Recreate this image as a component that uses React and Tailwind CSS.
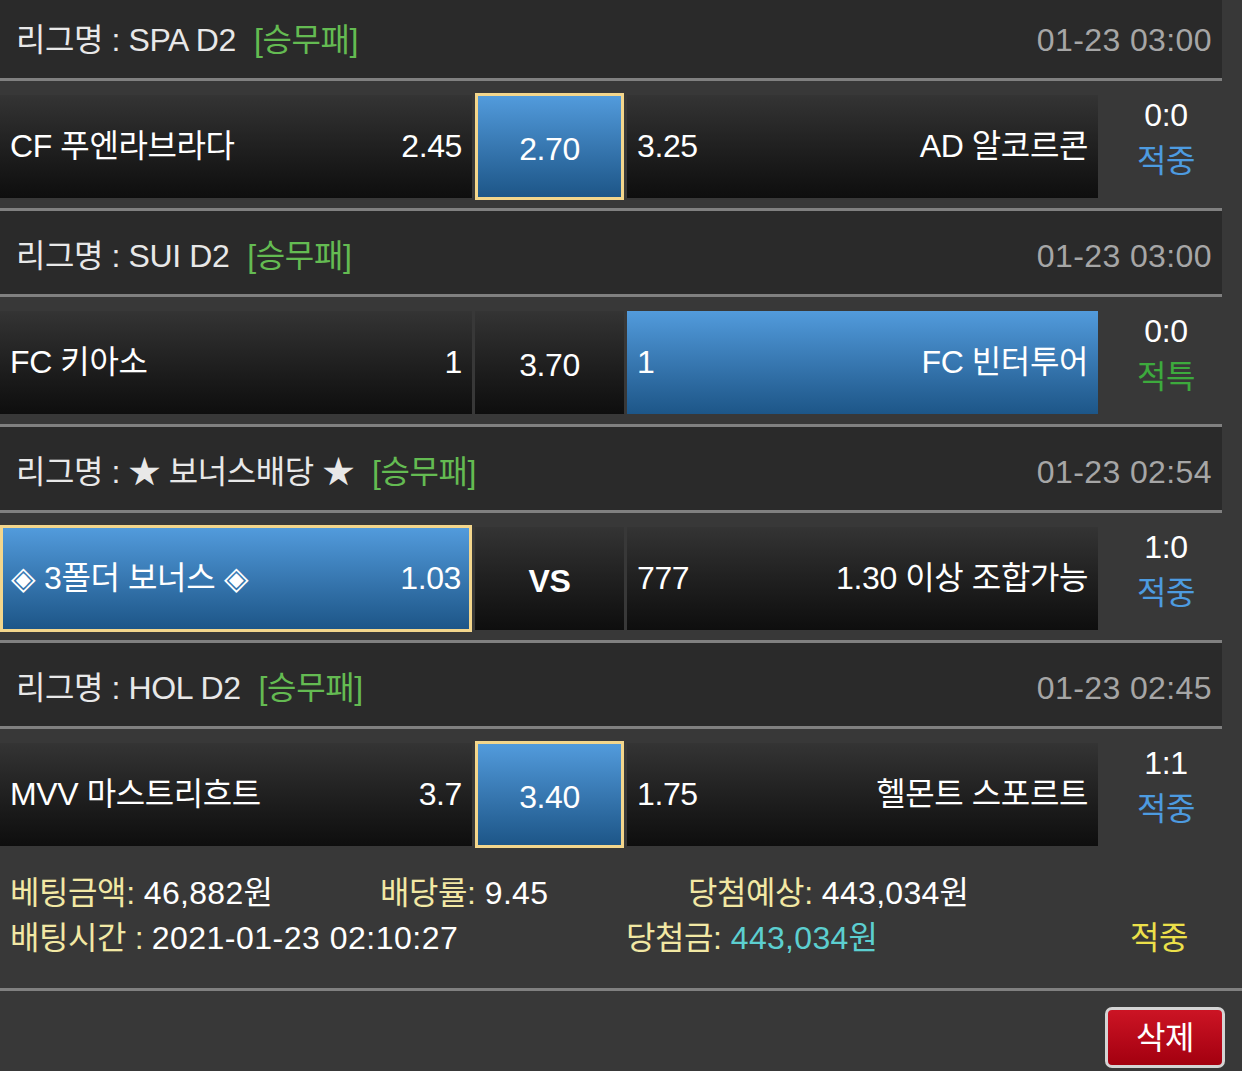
import React from "react";

const games = [
  {
    league: "SPA D2",
    date: "01-23 03:00",
    home: "CF 푸엔라브라다",
    homeOdd: "2.45",
    draw: "2.70",
    awayOdd: "3.25",
    away: "AD 알코르콘",
    pick: "draw",
    border: true,
    score: "0:0",
    result: "적중",
    resultColor: "text-[#4d9be0]",
  },
  {
    league: "SUI D2",
    date: "01-23 03:00",
    home: "FC 키아소",
    homeOdd: "1",
    draw: "3.70",
    awayOdd: "1",
    away: "FC 빈터투어",
    pick: "away",
    border: false,
    score: "0:0",
    result: "적특",
    resultColor: "text-[#3daa3d]",
  },
  {
    league: "★ 보너스배당 ★",
    date: "01-23 02:54",
    home: "◈ 3폴더 보너스 ◈",
    homeOdd: "1.03",
    draw: "VS",
    awayOdd: "777",
    away: "1.30 이상 조합가능",
    pick: "home",
    border: true,
    score: "1:0",
    result: "적중",
    resultColor: "text-[#4d9be0]",
  },
  {
    league: "HOL D2",
    date: "01-23 02:45",
    home: "MVV 마스트리흐트",
    homeOdd: "3.7",
    draw: "3.40",
    awayOdd: "1.75",
    away: "헬몬트 스포르트",
    pick: "draw",
    border: true,
    score: "1:1",
    result: "적중",
    resultColor: "text-[#4d9be0]",
  },
];

function cellClass(selected, border) {
  if (selected && border) {
    return "bg-linear-to-b from-[#529bdc] to-[#1d5688] border-[3px] border-[#f3d68c] -my-[2px]";
  }
  if (selected) {
    return "bg-linear-to-b from-[#529bdc] to-[#1d5688]";
  }
  return "bg-linear-to-b from-[#343434] to-[#0e0e0e]";
}

function Header({ game, first }) {
  return (
    <div
      className={`${first ? "h-[78px]" : "h-[83px]"} w-[1222px] bg-[#2a2a2a] flex items-center justify-between pl-[16px] pr-[10px] ${first ? "pt-[2px]" : "pt-[7px]"}`}
    >
      <div className="flex items-center text-[#e8e8e8]">
        <span>리그명 : {game.league}</span>
        <span className="ml-[18px] text-[#64bb52]">[승무패]</span>
      </div>
      <span className="text-[#a6a6a6] tracking-[0.4px]">{game.date}</span>
    </div>
  );
}

function Line({ full }) {
  return <div className={`${full ? "w-full" : "w-[1222px]"} h-[3px] bg-[#808080]`} />;
}

function MatchRow({ game }) {
  const homeSel = game.pick === "home";
  const drawSel = game.pick === "draw";
  const awaySel = game.pick === "away";
  return (
    <div className="h-[127px] flex pt-[14px] pb-[10px]">
      <div
        className={`w-[472px] flex items-center justify-between text-white pb-[2px] ${homeSel && game.border ? "pl-[8px] pr-[8px]" : "pl-[10px] pr-[10px]"} ${cellClass(homeSel, game.border)}`}
      >
        <span>{game.home}</span>
        <span>{game.homeOdd}</span>
      </div>
      <div className="w-[3px]" />
      <div
        className={`w-[149px] flex items-center justify-center text-white pt-[4px] ${game.draw === "VS" ? "font-bold" : ""} ${cellClass(drawSel, game.border)}`}
      >
        {game.draw}
      </div>
      <div className="w-[3px]" />
      <div
        className={`w-[471px] flex items-center justify-between text-white pl-[10px] pr-[10px] pb-[2px] ${cellClass(awaySel, game.border)}`}
      >
        <span>{game.awayOdd}</span>
        <span>{game.away}</span>
      </div>
      <div className="w-[124px] flex flex-col items-center pl-[12px] -mt-[2px]">
        <span className="leading-[44px] text-white">{game.score}</span>
        <span className={`leading-[48px] ${game.resultColor}`}>{game.result}</span>
      </div>
    </div>
  );
}

export default function App() {
  return (
    <div className="w-[1242px] h-[1071px] overflow-hidden bg-[#383838] font-['Liberation_Sans','Noto_Sans_CJK_KR',sans-serif] text-[32px] leading-none tracking-[-0.4px]">
      {games.map((g, i) => (
        <div key={i}>
          {i > 0 && <Line />}
          <Header game={g} first={i === 0} />
          <Line />
          <MatchRow game={g} />
        </div>
      ))}
      <div className="h-[132px] pt-[14px] pl-[10px]">
        <div className="flex h-[45px] items-center">
          <span className="w-[370px]">
            <span className="text-[#f2e8a4]">베팅금액:</span>
            <span className="text-white tracking-[0.3px]"> 46,882원</span>
          </span>
          <span className="w-[308px]">
            <span className="text-[#f2e8a4]">배당률:</span>
            <span className="text-white tracking-[0.3px]"> 9.45</span>
          </span>
          <span>
            <span className="text-[#f2e8a4]">당첨예상:</span>
            <span className="text-white tracking-[0.3px]"> 443,034원</span>
          </span>
        </div>
        <div className="flex h-[45px] items-center">
          <span className="w-[616px]">
            <span className="text-[#f2e8a4]">배팅시간 : </span>
            <span className="text-white tracking-[0.5px]">2021-01-23 02:10:27</span>
          </span>
          <span className="w-[504px]">
            <span className="text-[#f2e8a4]">당첨금:</span>
            <span className="text-[#5ccfd0] tracking-[0.3px]"> 443,034원</span>
          </span>
          <span className="text-[#ece04a]">적중</span>
        </div>
      </div>
      <Line full />
      <div className="flex justify-end pt-[16px] pr-[17px]">
        <button className="w-[120px] h-[61px] rounded-[7px] border-[3px] border-[#d4d4d4] bg-linear-to-b from-[#cc1424] to-[#a3000f] text-white text-[32px] flex items-center justify-center">
          삭제
        </button>
      </div>
    </div>
  );
}
